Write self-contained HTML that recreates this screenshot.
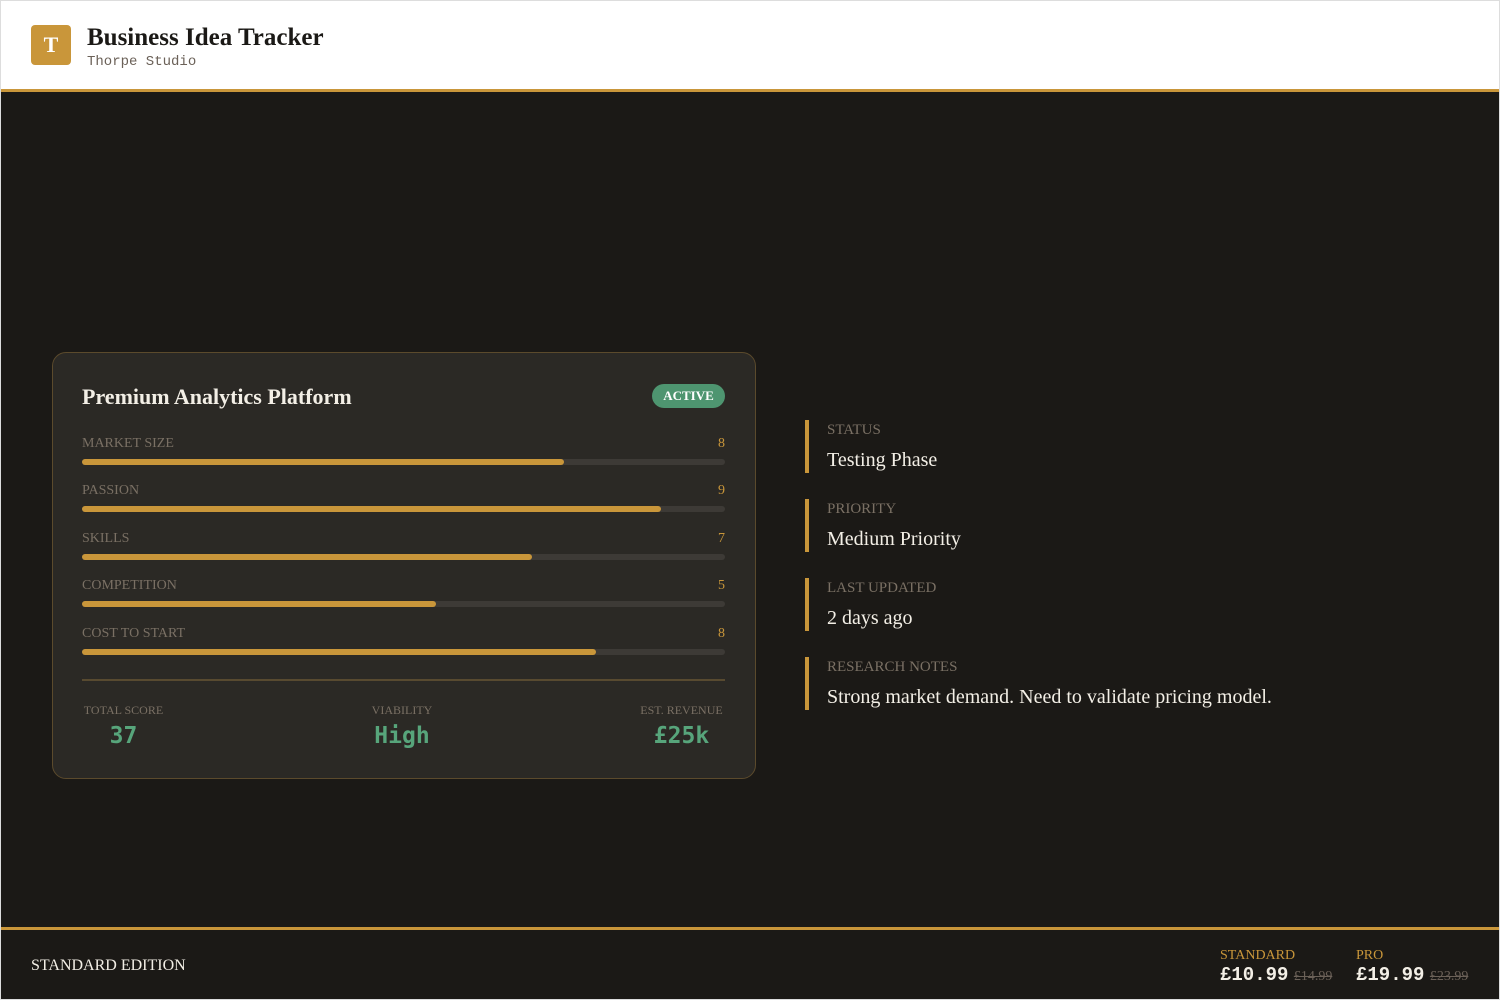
<!DOCTYPE html>
<html><head><meta charset="utf-8"><style>
*{margin:0;padding:0;box-sizing:border-box}
body{width:1500px;height:1000px;background:#1b1916;font-family:"Liberation Serif",serif;position:relative;overflow:hidden}
.frame{position:absolute;left:0;top:0;width:1500px;height:1000px;border:1px solid #ddd;pointer-events:none}
.hdr{position:absolute;left:0;top:0;width:1500px;height:92px;background:#fff;border-bottom:3px solid #c9963a}
.logo{position:absolute;left:31px;top:25px;width:40px;height:40px;background:#c9963a;border-radius:4px;color:#fff;font-weight:bold;font-size:22px;text-align:center;line-height:40px}
.t1{position:absolute;left:87px;top:24px;font-size:25px;font-weight:bold;color:#1b1916}
.t2{position:absolute;left:87px;top:54px;font-family:"Liberation Mono",monospace;font-size:14px;color:#6b6158}
.card{position:absolute;left:52px;top:352px;width:704px;height:427px;background:#2b2925;border:1px solid #5b4a2c;border-radius:14px}
.title{position:absolute;left:29px;top:31px;font-size:22px;font-weight:bold;color:#f3efe6}
.badge{position:absolute;left:599px;top:31px;width:73px;height:24px;border-radius:12px;background:#4e9570;color:#fff;font-size:13px;font-weight:bold;text-align:center;line-height:24px}
.row{position:absolute;left:29px;width:643px}
.lbl{font-size:14px;color:#7a7064;height:17px}
.num{position:absolute;right:0;top:0;font-size:14px;color:#c9963a}
.bar{margin-top:6px;height:6px;border-radius:3px;background:#3d3a36}
.bar i{display:block;height:6px;border-radius:3px;background:#c9963a}
.sep{position:absolute;left:29px;top:326px;width:643px;height:2px;background:#584a30}
.stat{position:absolute;top:350px;text-align:center}
.stat .l{font-size:12px;color:#7a7064}
.stat .v{font-family:"DejaVu Sans Mono",monospace;font-weight:bold;font-size:23px;color:#57a57b;margin-top:5px}
.info{position:absolute;left:805px;border-left:4px solid #c9963a;padding-left:18px;height:53px}
.info .l{font-size:15px;color:#7a7064;margin-top:2px}
.info .v{font-size:20px;color:#f3efe6;margin-top:10px}
.ftr{position:absolute;left:0;top:927px;width:1500px;height:73px;border-top:3px solid #c9963a}
.ed{position:absolute;left:31px;top:27px;font-size:16px;color:#f3efe6}
.pr{position:absolute;top:18px}
.pr .l{font-size:14px;color:#c9963a}
.pr .v{font-family:"Liberation Mono",monospace;font-weight:bold;font-size:19px;color:#f3efe6;white-space:nowrap}
.pr .v s{font-family:"Liberation Serif",serif;font-weight:normal;font-size:14px;color:#6b6158;margin-left:-6px}
</style></head><body>
<div class="hdr"><div class="logo">T</div><div class="t1">Business Idea Tracker</div><div class="t2">Thorpe Studio</div></div>
<div class="card">
<div class="title">Premium Analytics Platform</div>
<div class="badge">ACTIVE</div>
<div class="row" style="top:83px"><div class="lbl">MARKET SIZE</div><div class="num">8</div><div class="bar"><i style="width:75%"></i></div></div>
<div class="row" style="top:130px"><div class="lbl">PASSION</div><div class="num">9</div><div class="bar"><i style="width:90%"></i></div></div>
<div class="row" style="top:178px"><div class="lbl">SKILLS</div><div class="num">7</div><div class="bar"><i style="width:70%"></i></div></div>
<div class="row" style="top:225px"><div class="lbl">COMPETITION</div><div class="num">5</div><div class="bar"><i style="width:55%"></i></div></div>
<div class="row" style="top:273px"><div class="lbl">COST TO START</div><div class="num">8</div><div class="bar"><i style="width:80%"></i></div></div>
<div class="sep"></div>
<div class="stat" style="left:29px;width:83px"><div class="l">TOTAL SCORE</div><div class="v">37</div></div>
<div class="stat" style="left:317px;width:64px"><div class="l">VIABILITY</div><div class="v">High</div></div>
<div class="stat" style="left:585px;width:87px"><div class="l">EST. REVENUE</div><div class="v">£25k</div></div>
</div>
<div class="info" style="top:420px"><div class="l">STATUS</div><div class="v">Testing Phase</div></div>
<div class="info" style="top:499px"><div class="l">PRIORITY</div><div class="v">Medium Priority</div></div>
<div class="info" style="top:578px"><div class="l">LAST UPDATED</div><div class="v">2 days ago</div></div>
<div class="info" style="top:657px"><div class="l">RESEARCH NOTES</div><div class="v">Strong market demand. Need to validate pricing model.</div></div>
<div class="ftr"><div class="ed">STANDARD EDITION</div>
<div class="pr" style="left:1220px"><div class="l">STANDARD</div><div class="v">£10.99 <s>£14.99</s></div></div>
<div class="pr" style="left:1356px"><div class="l">PRO</div><div class="v">£19.99 <s>£23.99</s></div></div>
</div>
<div class="frame"></div>
</body></html>
